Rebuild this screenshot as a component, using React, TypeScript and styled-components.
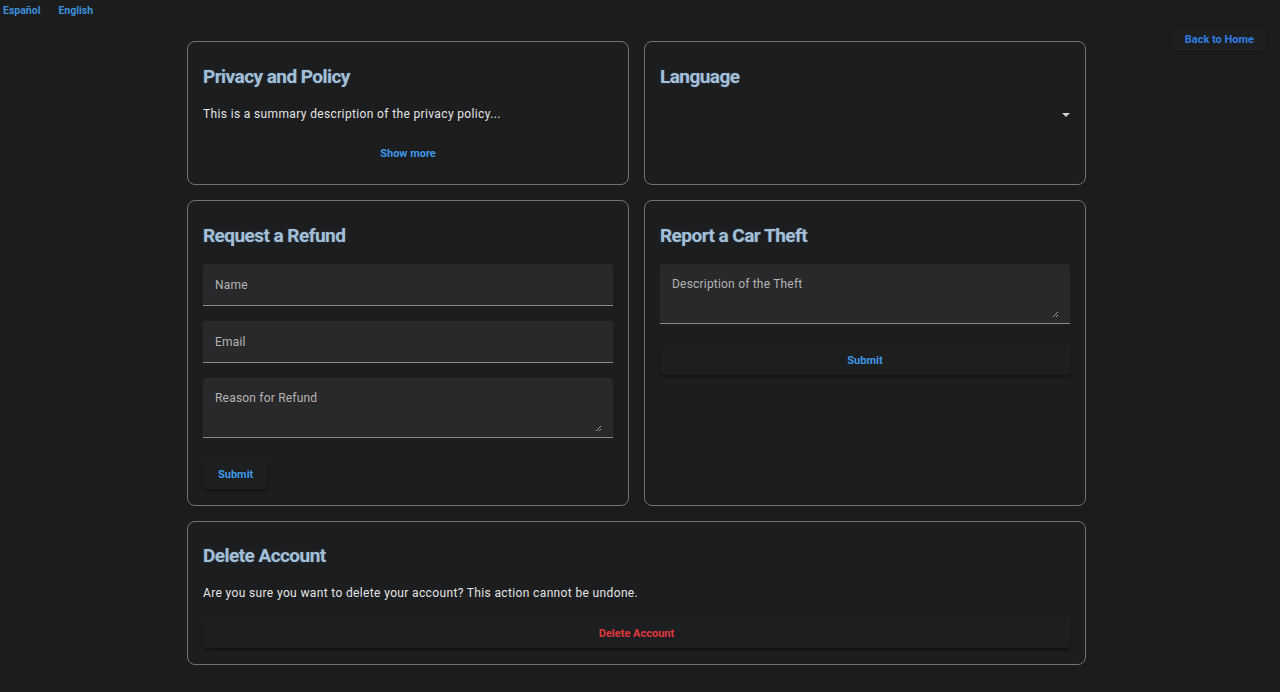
import React from "react";
import styled, { createGlobalStyle } from "styled-components";

const Global = createGlobalStyle`
  html, body { margin: 0; padding: 0; background: #1b1c1e; }
  body { font-family: Roboto, "Noto Sans", Arial, sans-serif; color: #e2e2e2; }
  * { box-sizing: border-box; }
`;

const Page = styled.div`
  min-height: 692px;
  position: relative;
`;

const LangBar = styled.nav`
  display: flex;
  gap: 18px;
  padding: 4px 0 0 3px;
  height: 41px;
`;

const LangLink = styled.a`
  font-size: 10.5px;
  font-weight: 700;
  color: #3d8fd8;
  text-decoration: none;
  line-height: 13px;
  cursor: pointer;
`;

const BackButton = styled.button`
  position: absolute;
  top: 27px;
  right: 13px;
  height: 24px;
  padding: 0 13px;
  border: none;
  border-radius: 4px;
  background: #1d1e20;
  box-shadow: 0 1px 3px rgba(0,0,0,0.35);
  color: #2f7fe0;
  font-family: Roboto, Arial, sans-serif;
  font-size: 11px;
  font-weight: 700;
`;

const Main = styled.main`
  display: grid;
  grid-template-columns: 442px 442px;
  grid-template-rows: 144px 306px 144px;
  gap: 15px 15px;
  width: 899px;
  margin-left: 187px;
`;

const Card = styled.section<{ $wide?: boolean }>`
  grid-column: ${(p) => (p.$wide ? "1 / span 2" : "auto")};
  display: flex;
  flex-direction: column;
  background: #1c1d1f;
  border: 1px solid #727272;
  border-radius: 8px;
  padding: ${(p) => (p.$wide ? "20px" : "21px")} 15px 16px 15px;
`;

const Title = styled.h2`
  margin: 0;
  font-size: 19px;
  font-weight: 700;
  letter-spacing: -0.55px;
  color: #a3c0d8;
  text-shadow: 0 0 2px rgba(120, 170, 220, 0.35);
  line-height: 28px;
`;

const Text = styled.p`
  margin: 14px 0 0;
  font-size: 12px;
  line-height: 18px;
  letter-spacing: 0.36px;
  color: #e4e4e4;
`;

const TextButton = styled.button<{ $danger?: boolean; $raised?: boolean; $full?: boolean }>`
  align-self: ${(p) => (p.$full ? "stretch" : "flex-start")};
  height: 30px;
  padding: 0 15px;
  border: none;
  border-radius: 4px;
  background: ${(p) => (p.$raised ? "#1d1e20" : "transparent")};
  box-shadow: ${(p) => (p.$raised ? "0 2px 3px rgba(0,0,0,0.4)" : "none")};
  color: ${(p) => (p.$danger ? "#e0393e" : "#3f98e6")};
  font-family: Roboto, Arial, sans-serif;
  font-size: 11px;
  font-weight: 700;
`;

const ButtonRow = styled.div<{ $top: number }>`
  display: flex;
  margin-top: ${(p) => p.$top}px;
`;

const SelectBox = styled.div`
  margin-top: 14px;
  height: 20px;
  display: flex;
  justify-content: flex-end;
  align-items: center;
  padding-right: 0;
`;

const Caret = styled.span`
  width: 0;
  height: 0;
  border-left: 4px solid transparent;
  border-right: 4px solid transparent;
  border-top: 4px solid #d0d0d0;
`;

const Form = styled.form`
  display: flex;
  flex-direction: column;
  gap: 15px;
  margin-top: 14px;
`;

const Field = styled.div<{ $tall?: boolean }>`
  position: relative;
  height: ${(p) => (p.$tall ? 60 : 42)}px;
  background: #29292b;
  border-radius: 4px 4px 0 0;
  border-bottom: 1px solid #8a8a8a;
  padding: ${(p) => (p.$tall ? "13px 12px" : "0 12px")};
  display: flex;
  align-items: ${(p) => (p.$tall ? "flex-start" : "center")};
`;

const Label = styled.span`
  font-size: 12px;
  letter-spacing: 0.2px;
  color: #b4b4b4;
`;

const Grip = styled.svg`
  position: absolute;
  right: 11px;
  bottom: 5px;
`;

const ResizeGrip = () => (
  <Grip width="7" height="7" viewBox="0 0 7 7">
    <path d="M1 6 L6 1 M4 6 L6 4" stroke="#9a9a9a" strokeWidth="1" />
  </Grip>
);

export default function App() {
  return (
    <Page>
      <Global />
      <LangBar>
        <LangLink>Español</LangLink>
        <LangLink>English</LangLink>
      </LangBar>
      <BackButton>Back to Home</BackButton>
      <Main>
        <Card>
          <Title>Privacy and Policy</Title>
          <Text>This is a summary description of the privacy policy...</Text>
          <ButtonRow $top={15}>
            <TextButton $full style={{ flex: 1 }}>Show more</TextButton>
          </ButtonRow>
        </Card>
        <Card>
          <Title>Language</Title>
          <SelectBox>
            <Caret />
          </SelectBox>
        </Card>
        <Card>
          <Title>Request a Refund</Title>
          <Form>
            <Field><Label>Name</Label></Field>
            <Field><Label>Email</Label></Field>
            <Field $tall><Label>Reason for Refund</Label><ResizeGrip /></Field>
          </Form>
          <ButtonRow $top={21}>
            <TextButton $raised>Submit</TextButton>
          </ButtonRow>
        </Card>
        <Card>
          <Title>Report a Car Theft</Title>
          <Form>
            <Field $tall><Label>Description of the Theft</Label><ResizeGrip /></Field>
          </Form>
          <ButtonRow $top={21}>
            <TextButton $raised $full style={{ flex: 1 }}>Submit</TextButton>
          </ButtonRow>
        </Card>
        <Card $wide>
          <Title>Delete Account</Title>
          <Text>Are you sure you want to delete your account? This action cannot be undone.</Text>
          <ButtonRow $top={16}>
            <TextButton $raised $danger $full style={{ flex: 1 }}>Delete Account</TextButton>
          </ButtonRow>
        </Card>
      </Main>
    </Page>
  );
}
